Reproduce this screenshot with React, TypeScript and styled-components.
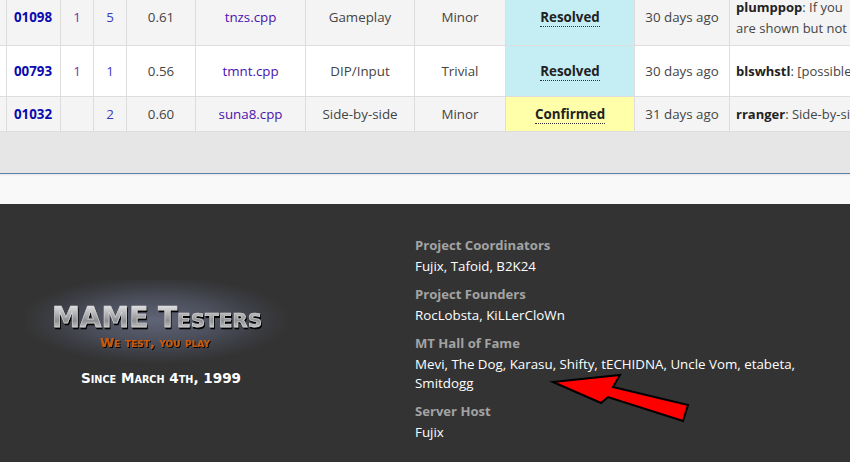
import React from "react";
import styled, { createGlobalStyle } from "styled-components";

const Global = createGlobalStyle`
  html, body { margin: 0; padding: 0; background: #f9f9f9; }
  body { font-family: "Open Sans", "Liberation Sans", sans-serif; font-size: 13.33px; color: #333; width: 850px; height: 462px; overflow: hidden; }
`;

const Page = styled.div`
  width: 850px;
  height: 462px;
  display: flex;
  flex-direction: column;
  overflow: hidden;
`;

const TablePanel = styled.section`
  height: 173px;
  flex: none;
  background: #e6e6e6;
  overflow: hidden;
  border-bottom: 1px solid #5b7fa8;
  box-shadow: 0 1px 2px rgba(0, 0, 0, 0.08);
`;

const Table = styled.table`
  width: 850px;
  margin-top: -11px;
  table-layout: fixed;
  border-collapse: separate;
  border-spacing: 0;
`;

const Row = styled.tr<{ $alt?: boolean; $h: number }>`
  height: ${(p) => p.$h}px;
  background: ${(p) => (p.$alt ? "#f4f4f4" : "#ffffff")};
`;

const Cell = styled.td`
  padding: 0;
  text-align: center;
  vertical-align: middle;
  border-right: 1px solid #dddddd;
  border-bottom: 1px solid #dddddd;
  color: #444;
  white-space: nowrap;
  overflow: hidden;
  line-height: 21px;
`;

const StatusCell = styled(Cell)<{ $status: "resolved" | "confirmed" }>`
  background: ${(p) => (p.$status === "resolved" ? "#c5edf4" : "#ffffaa")};
`;

const Status = styled.span`
  font-weight: 700;
  color: #222;
  border-bottom: 1px dotted #333;
  display: inline-block;
  line-height: 18px;
`;

const CommentCell = styled(Cell)<{ $twoLines?: boolean }>`
  text-align: left;
  padding-left: 6px;
  padding-top: ${(p) => (p.$twoLines ? 2 : 0)}px;
  border-right: 0;
  font-size: 13px;
`;

const Author = styled.b`
  color: #222;
`;

const IdLink = styled.a`
  font-weight: 700;
  color: #0a0ab0;
  margin-right: 1px;
`;

const CountLink = styled.a<{ $visited?: boolean }>`
  color: ${(p) => (p.$visited ? "#7a2fa8" : "#3a3ac0")};
`;

const FileLink = styled.a`
  color: #4a12b0;
`;

const Footer = styled.footer`
  position: relative;
  margin-top: 30px;
  flex: 1;
  background: #333333;
  display: flex;
  overflow: hidden;
`;

const LogoColumn = styled.div`
  width: 415px;
  flex: none;
  padding: 76px 0 0 26px;
  box-sizing: border-box;
`;

const Credits = styled.div`
  flex: 1;
  padding-top: 32px;
  line-height: 19px;
  color: #ffffff;
`;

const Group = styled.div`
  margin-bottom: 9px;
`;

const Heading = styled.div`
  font-weight: 700;
  font-size: 13.1px;
  color: #a3a3a3;
  line-height: 19px;
  margin-bottom: 2px;
`;

const Arrow = styled.svg`
  position: absolute;
  left: 545px;
  top: 161px;
`;

const rows = [
  { alt: true, h: 57, id: "01098", a: "1", b: "5", v: "0.61", f: "tnzs.cpp", c: "Gameplay", s: "Minor", st: "resolved", d: "30 days ago", who: "plumppop", l1: " If you", l2: "are shown but not" },
  { alt: false, h: 51, id: "00793", a: "1", b: "1", v: "0.56", f: "tmnt.cpp", c: "DIP/Input", s: "Trivial", st: "resolved", d: "30 days ago", who: "blswhstl", l1: " [possible" },
  { alt: true, h: 35, id: "01032", a: "", b: "2", v: "0.60", f: "suna8.cpp", c: "Side-by-side", s: "Minor", st: "confirmed", d: "31 days ago", who: "rranger", l1: " Side-by-side" },
] as const;

const widths = [7, 54, 33, 33, 69, 110, 109, 91, 129, 95, 120];

const groups = [
  { t: "Project Coordinators", b: ["Fujix, Tafoid, B2K24"] },
  { t: "Project Founders", b: ["RocLobsta, KiLLerCloWn"] },
  { t: "MT Hall of Fame", b: ["Mevi, The Dog, Karasu, Shifty, tECHIDNA, Uncle Vom, etabeta,", "Smitdogg"] },
  { t: "Server Host", b: ["Fujix"] },
];

function Logo() {
  return (
    <svg width="270" height="110" viewBox="0 0 270 110" style={{ display: "block" }}>
      <defs>
        <linearGradient id="metal" x1="0" y1="0" x2="0" y2="1">
          <stop offset="0" stopColor="#fafafa" />
          <stop offset="0.6" stopColor="#8d8e92" />
          <stop offset="1" stopColor="#f4f4f4" />
        </linearGradient>
        <radialGradient id="glow" cx="0.5" cy="0.5" r="0.5">
          <stop offset="0" stopColor="#5f6477" />
          <stop offset="0.5" stopColor="#4b4e5a" />
          <stop offset="0.8" stopColor="#3b3c41" />
          <stop offset="1" stopColor="#333333" />
        </radialGradient>
        <filter id="shade" x="-10%" y="-30%" width="120%" height="170%">
          <feDropShadow dx="1" dy="2" stdDeviation="0.6" floodColor="#000" />
        </filter>
        <filter id="soft" x="-10%" y="-30%" width="120%" height="170%">
          <feDropShadow dx="1" dy="1" stdDeviation="0.5" floodColor="#000" />
        </filter>
      </defs>
      <ellipse cx="129" cy="40" rx="135" ry="44" fill="url(#glow)" />
      <text
        x="26"
        y="47"
        filter="url(#shade)"
        fill="url(#metal)"
        stroke="#d8d8d8"
        strokeWidth="0.6"
        fontFamily="'DejaVu Sans', sans-serif"
        fontWeight="700"
        fontSize="28"
        textLength="210"
        lengthAdjust="spacingAndGlyphs"
        style={{ fontVariant: "small-caps" }}
      >
        MAME Testers
      </text>
      <text
        x="74"
        y="67"
        filter="url(#soft)"
        fontSize="13"
        fontWeight="700"
        fontFamily="'DejaVu Sans', sans-serif"
        fill="#c95a08"
        textLength="110"
        lengthAdjust="spacingAndGlyphs"
        style={{ fontVariant: "small-caps" }}
      >
        We test, you play
      </text>
      <text
        x="55"
        y="103"
        fontSize="14"
        fontWeight="700"
        fontFamily="'DejaVu Sans', sans-serif"
        fill="#ffffff"
        textLength="160"
        lengthAdjust="spacingAndGlyphs"
        style={{ fontVariant: "small-caps" }}
      >
        Since March 4th, 1999
      </text>
    </svg>
  );
}

export default function App() {
  return (
    <Page>
      <Global />
      <TablePanel>
        <Table>
          <colgroup>
            {widths.map((w, i) => (
              <col key={i} style={{ width: w }} />
            ))}
          </colgroup>
          <tbody>
            {rows.map((r) => (
              <Row key={r.id} $alt={r.alt} $h={r.h}>
                <Cell />
                <Cell><IdLink>{r.id}</IdLink></Cell>
                <Cell><CountLink $visited>{r.a}</CountLink></Cell>
                <Cell><CountLink>{r.b}</CountLink></Cell>
                <Cell>{r.v}</Cell>
                <Cell><FileLink>{r.f}</FileLink></Cell>
                <Cell>{r.c}</Cell>
                <Cell>{r.s}</Cell>
                <StatusCell $status={r.st}>
                  <Status>{r.st === "resolved" ? "Resolved" : "Confirmed"}</Status>
                </StatusCell>
                <Cell>{r.d}</Cell>
                <CommentCell $twoLines={"l2" in r}>
                  <Author>{r.who}</Author>:{r.l1}
                  {"l2" in r ? (
                    <>
                      <br />
                      {r.l2}
                    </>
                  ) : null}
                </CommentCell>
              </Row>
            ))}
          </tbody>
        </Table>
      </TablePanel>
      <Footer>
        <LogoColumn>
          <Logo />
        </LogoColumn>
        <Credits>
          {groups.map((g) => (
            <Group key={g.t}>
              <Heading>{g.t}</Heading>
              {g.b.map((l) => (
                <div key={l}>{l}</div>
              ))}
            </Group>
          ))}
        </Credits>
        <Arrow width="150" height="70" viewBox="545 365 150 70">
          <path d="M553 382 L620 375 L613 387 L688 405 L683 421 L608 397 L601 403 Z" fill="#ff0000" stroke="#000" strokeWidth="2" strokeLinejoin="miter" />
        </Arrow>
      </Footer>
    </Page>
  );
}
